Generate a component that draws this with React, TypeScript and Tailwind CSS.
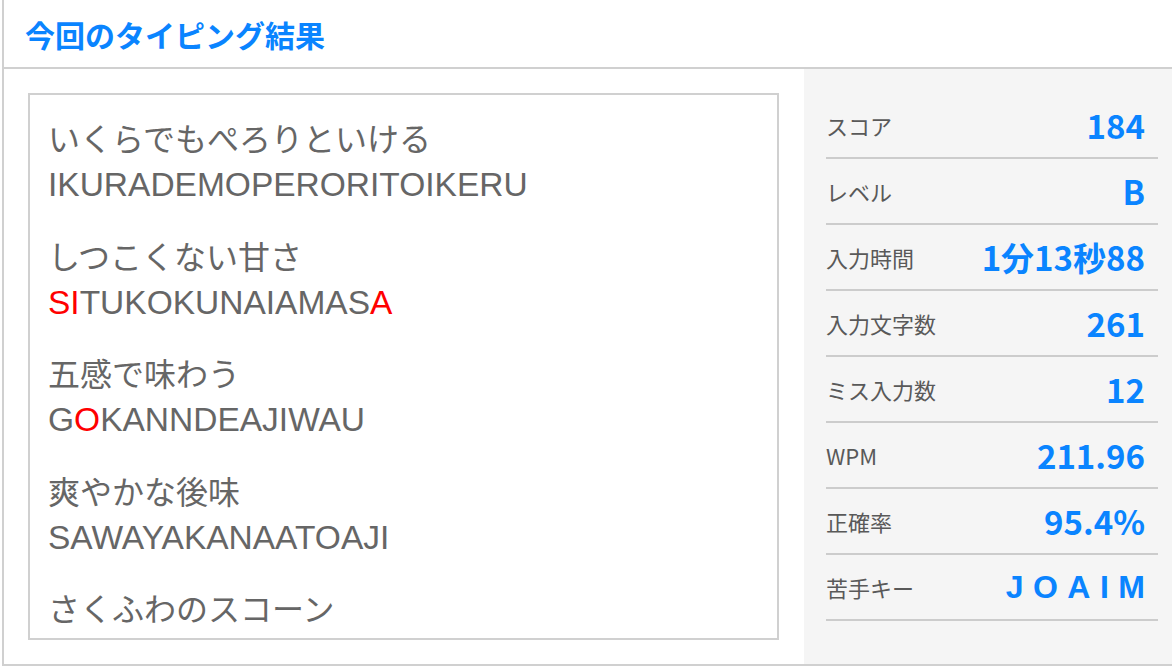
import React from 'react';

type Seg = { text: string; miss?: boolean };

type Line = {
  kana: string;
  roman: Seg[];
};

const lines: Line[] = [
  { kana: 'いくらでもぺろりといける', roman: [{ text: 'IKURADEMOPERORITOIKERU' }] },
  {
    kana: 'しつこくない甘さ',
    roman: [{ text: 'SI', miss: true }, { text: 'TUKOKUNAIAMAS' }, { text: 'A', miss: true }],
  },
  {
    kana: '五感で味わう',
    roman: [{ text: 'G' }, { text: 'O', miss: true }, { text: 'KANNDEAJIWAU' }],
  },
  { kana: '爽やかな後味', roman: [{ text: 'SAWAYAKANAATOAJI' }] },
  { kana: 'さくふわのスコーン', roman: [] },
];

const stats = [
  { label: 'スコア', value: '184' },
  { label: 'レベル', value: 'B' },
  { label: '入力時間', value: '1分13秒88' },
  { label: '入力文字数', value: '261' },
  { label: 'ミス入力数', value: '12' },
  { label: 'WPM', value: '211.96' },
  { label: '正確率', value: '95.4%' },
];

const App: React.FC = () => {
  return (
    <div className="w-[1172px] h-[672px] bg-white overflow-hidden font-['Noto_Sans_CJK_JP',sans-serif]">
      <div className="ml-[2px] w-[1170px] border-l-2 border-b-2 border-[#d0d0d0]">
        {/* Header */}
        <div className="h-[69px] flex items-center pl-[21px] border-b-2 border-[#d0d0d0]">
          <h1 className="text-[30px] font-bold text-[#0a84ff] leading-none">今回のタイピング結果</h1>
        </div>

        <div className="flex h-[595px]">
          {/* Typed text */}
          <div className="w-[800px] pt-[24px] pl-[24px] pr-[25px] pb-[24px]">
            <div className="h-[547px] border-2 border-[#d0d0d0] overflow-hidden pt-[18px] pl-[18px] text-[#666666]">
              {lines.map((line, i) => (
                <div key={i} className={i === 0 ? '' : 'mt-[21.5px]'}>
                  <p className="text-[32px] leading-[48px]">{line.kana}</p>
                  {line.roman.length > 0 && (
                    <p className="text-[33.5px] leading-[48px] font-['Liberation_Sans','Noto_Sans_CJK_JP',sans-serif]">
                      {line.roman.map((seg, j) => (
                        <span key={j} className={seg.miss ? 'text-[#ff0000]' : ''}>
                          {seg.text}
                        </span>
                      ))}
                    </p>
                  )}
                </div>
              ))}
            </div>
          </div>

          {/* Stats */}
          <div className="flex-1 bg-[#f5f5f5] pt-[24px] pl-[22px] pr-[14px]">
            {stats.map((s) => (
              <div
                key={s.label}
                className="h-[66px] flex items-center justify-between border-b-2 border-[#cccccc] pr-[13px]"
              >
                <span className="text-[22px] text-[#595959]">{s.label}</span>
                <span className="text-[33px] font-bold text-[#0a84ff] leading-none">{s.value}</span>
              </div>
            ))}
            <div className="h-[66px] flex items-center justify-between border-b-2 border-[#cccccc] pr-[13px]">
              <span className="text-[22px] text-[#595959]">苦手キー</span>
              <span className="text-[32px] font-bold text-[#0a84ff] leading-none tracking-[9.5px] -mr-[9.5px] font-['Liberation_Sans',sans-serif]">
                JOAIM
              </span>
            </div>
          </div>
        </div>
      </div>
    </div>
  );
};

export default App;
